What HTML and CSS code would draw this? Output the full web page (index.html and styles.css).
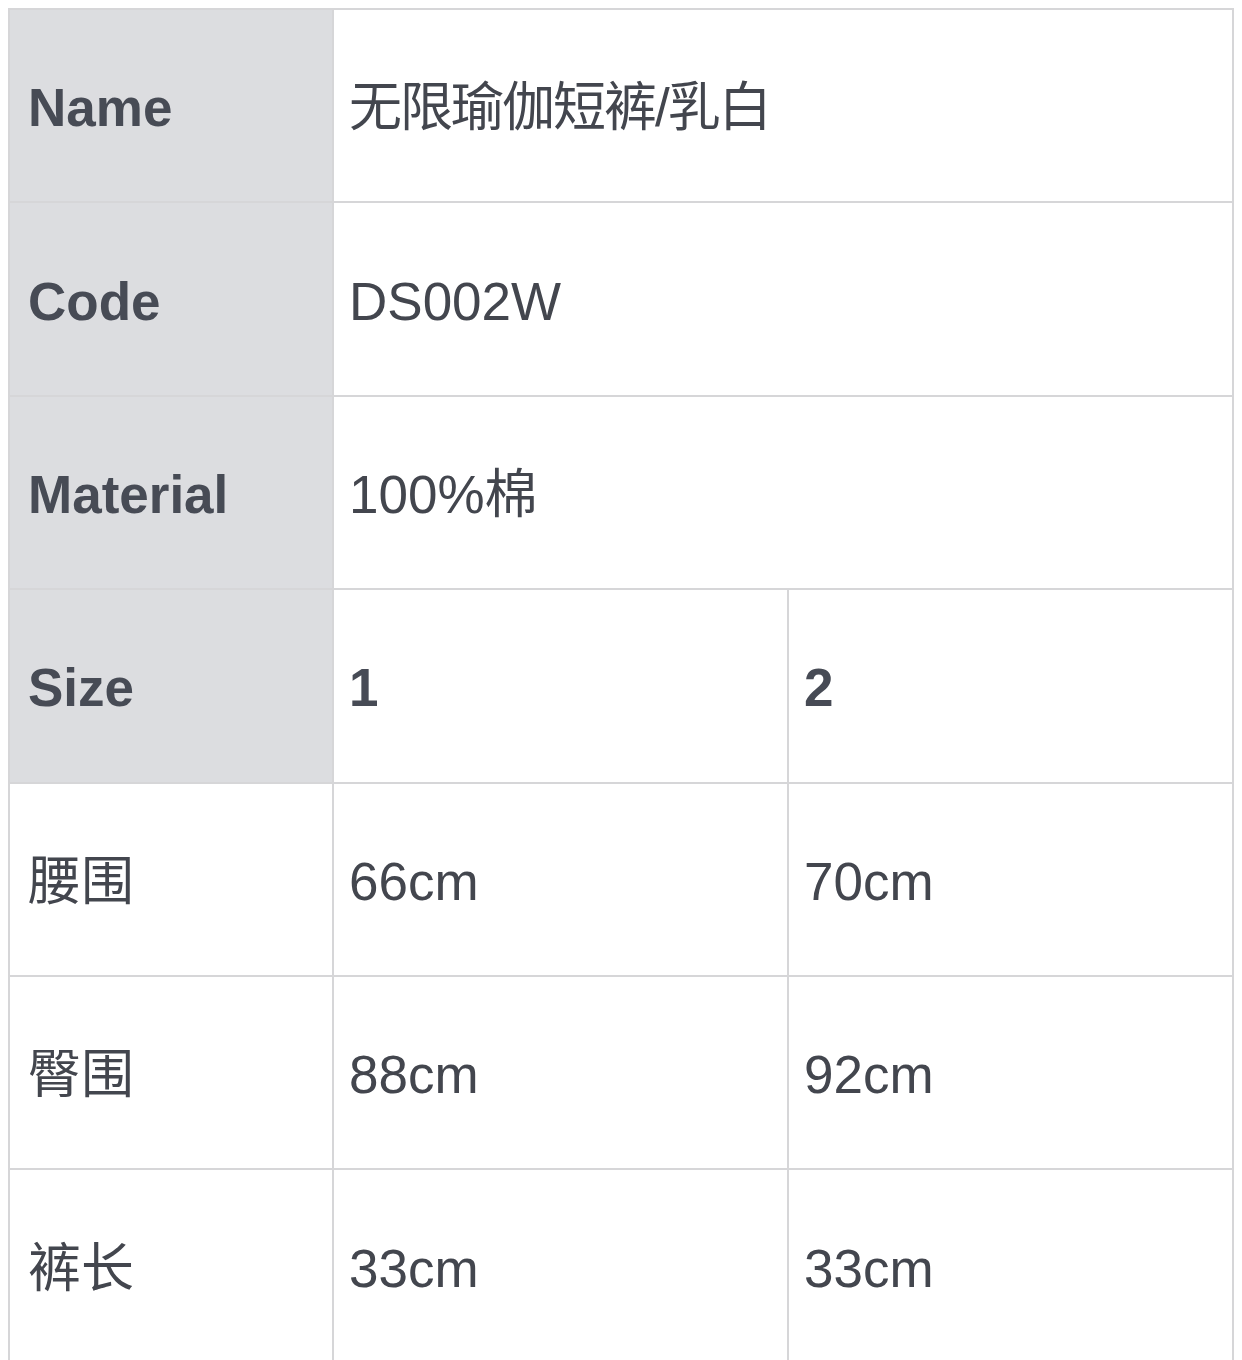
FILE: index.html
```html
<!DOCTYPE html>
<html lang="zh">
<head>
<meta charset="utf-8">
<title>Size chart</title>
<link rel="stylesheet" href="styles.css">
</head>
<body>
<table class="spec">
  <colgroup>
    <col class="c-label">
    <col class="c-one">
    <col class="c-two">
  </colgroup>
  <tbody>
    <tr>
      <th class="head">Name</th>
      <td colspan="2" class="tight">无限瑜伽短裤/乳白</td>
    </tr>
    <tr>
      <th class="head">Code</th>
      <td colspan="2">DS002W</td>
    </tr>
    <tr>
      <th class="head">Material</th>
      <td colspan="2">100%棉</td>
    </tr>
    <tr>
      <th class="head">Size</th>
      <td class="bold">1</td>
      <td class="bold">2</td>
    </tr>
    <tr>
      <td class="label">腰围</td>
      <td>66cm</td>
      <td>70cm</td>
    </tr>
    <tr>
      <td class="label">臀围</td>
      <td>88cm</td>
      <td>92cm</td>
    </tr>
    <tr>
      <td class="label">裤长</td>
      <td>33cm</td>
      <td>33cm</td>
    </tr>
  </tbody>
</table>
</body>
</html>
```
FILE: styles.css
```css
html, body {
  background: #ffffff;
}
body {
  margin: 8px;
  font-family: "Liberation Sans", "Noto Sans CJK SC", sans-serif;
}
.spec {
  border-collapse: collapse;
  table-layout: fixed;
  width: 1224px;
}
.c-label { width: 324px; }
.c-one { width: 455px; }
.c-two { width: 445px; }
.spec th,
.spec td {
  height: 193.4px;
  box-sizing: border-box;
  border: 2px solid #d6d6d8;
  padding: 4px 0 0 15px;
  text-align: left;
  vertical-align: middle;
  font-size: 53px;
  line-height: 1;
  color: #43464e;
  font-weight: 400;
}
.spec th.head,
.spec td.label {
  padding-left: 18px;
}
.spec th.head {
  background: #dcdde0;
  font-weight: 700;
  color: #474b55;
}
.spec td.bold {
  font-weight: 700;
  color: #474b55;
}
.spec td.tight {
  letter-spacing: -2px;
}
```
